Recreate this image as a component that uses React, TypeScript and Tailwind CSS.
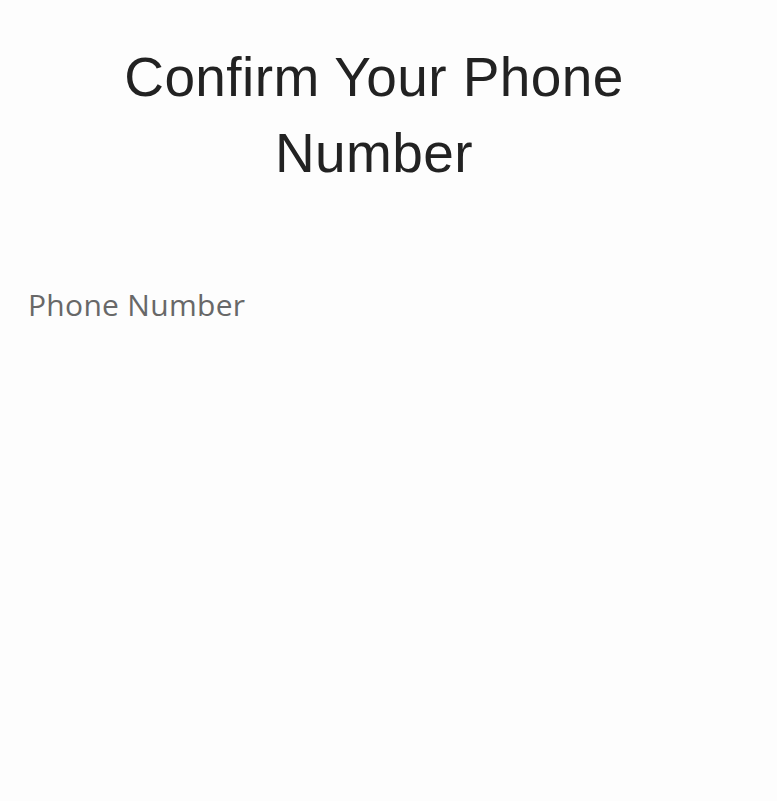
export default function App() {
  return (
    <main className="min-h-screen w-full bg-[#fdfdfd] flex">
      <div className="w-[748px] flex flex-col">
        <h1 className="pt-[39px] text-center text-[55px] leading-[76px] tracking-[0.4px] text-[#222] font-['Liberation_Sans',Arial,sans-serif] font-normal">
          Confirm Your Phone
          <br />
          Number
        </h1>
        <label className="mt-[96px] pl-[28px] text-[30px] leading-[36px] tracking-[0.3px] text-[#686868] font-['Open_Sans',sans-serif]">
          Phone Number
        </label>
      </div>
    </main>
  );
}
